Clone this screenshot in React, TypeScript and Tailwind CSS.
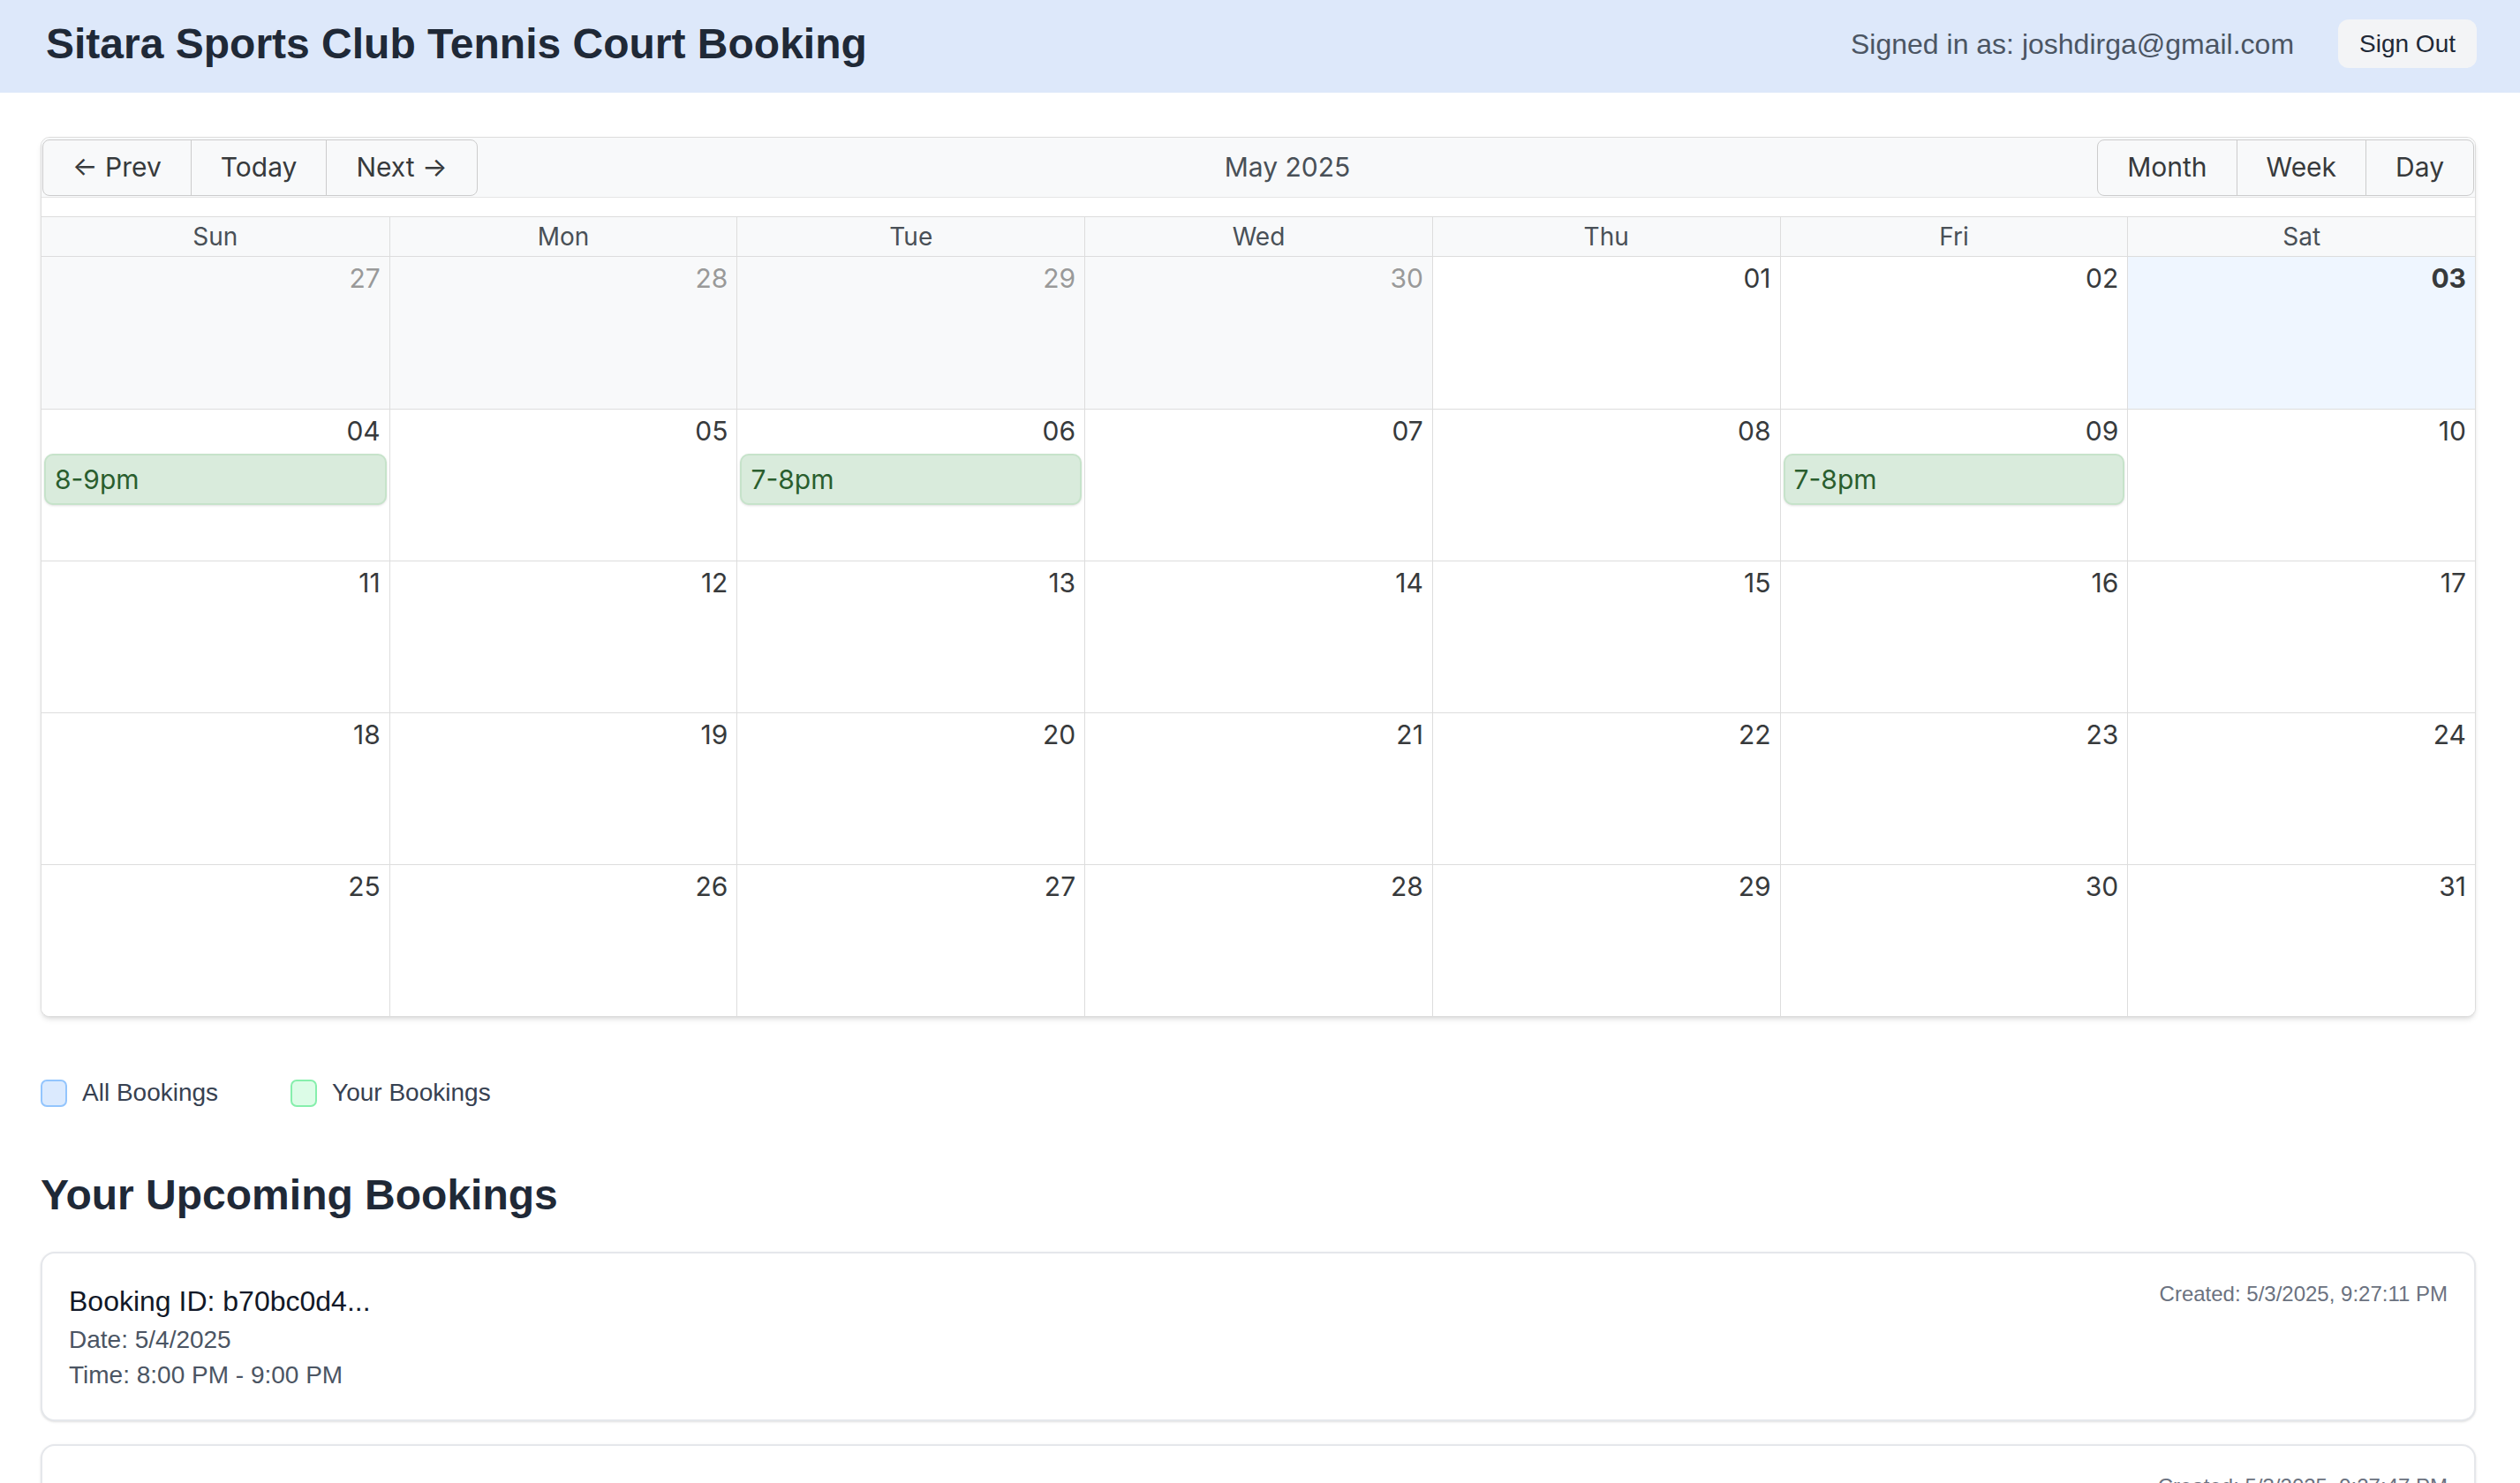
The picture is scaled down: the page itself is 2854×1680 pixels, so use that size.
import React from "react";

type Cell = { day: string; off?: boolean; today?: boolean; event?: string };

const weeks: Cell[][] = [
  [
    { day: "27", off: true },
    { day: "28", off: true },
    { day: "29", off: true },
    { day: "30", off: true },
    { day: "01" },
    { day: "02" },
    { day: "03", today: true },
  ],
  [
    { day: "04", event: "8-9pm" },
    { day: "05" },
    { day: "06", event: "7-8pm" },
    { day: "07" },
    { day: "08" },
    { day: "09", event: "7-8pm" },
    { day: "10" },
  ],
  ["11", "12", "13", "14", "15", "16", "17"].map((day) => ({ day })),
  ["18", "19", "20", "21", "22", "23", "24"].map((day) => ({ day })),
  ["25", "26", "27", "28", "29", "30", "31"].map((day) => ({ day })),
];

const dayNames = ["Sun", "Mon", "Tue", "Wed", "Thu", "Fri", "Sat"];

const bookings = [
  {
    id: "b70bc0d4...",
    date: "5/4/2025",
    time: "8:00 PM - 9:00 PM",
    created: "5/3/2025, 9:27:11 PM",
  },
  {
    id: "3f1e9a27...",
    date: "5/6/2025",
    time: "7:00 PM - 8:00 PM",
    created: "5/3/2025, 9:27:47 PM",
  },
];

function Toolbar() {
  const btn =
    "h-[64px] border border-[#ccc] bg-[#f8f9fa] px-[33px] text-[30px] text-[#373a3c]";
  return (
    <div className="flex h-[68px] items-center border-b border-[#e6e6e6] bg-[#f8f9fa] px-[1px]">
      <div className="flex">
        <button className={`${btn} rounded-l-[8px]`}>← Prev</button>
        <button className={`${btn} -ml-px`}>Today</button>
        <button className={`${btn} -ml-px rounded-r-[8px]`}>Next →</button>
      </div>
      <div className="flex-1 text-center text-[30px] text-[#495057]">May 2025</div>
      <div className="flex">
        <button className={`${btn} rounded-l-[8px]`}>Month</button>
        <button className={`${btn} -ml-px`}>Week</button>
        <button className={`${btn} -ml-px rounded-r-[8px]`}>Day</button>
      </div>
    </div>
  );
}

function MonthView() {
  return (
    <div className="mt-[21px] border-t border-[#ddd]">
      <div className="grid h-[45px] grid-cols-7 border-b border-[#ddd] bg-[#f8f9fa]">
        {dayNames.map((d, i) => (
          <div
            key={d}
            className={`flex items-center justify-center text-[28px] text-[#495057] ${i > 0 ? "border-l border-[#ddd]" : ""}`}
          >
            {d}
          </div>
        ))}
      </div>
      {weeks.map((week, w) => (
        <div
          key={w}
          className={`grid h-[172px] grid-cols-7 ${w > 0 ? "border-t border-[#ddd]" : ""}`}
        >
          {week.map((c, i) => (
            <div
              key={i}
              className={`flex flex-col px-[3px] ${i > 0 ? "border-l border-[#ddd]" : ""} ${
                c.today ? "bg-[#eff6ff]" : c.off ? "bg-[#f8f9fa]" : "bg-white"
              }`}
            >
              <div
                className={`pr-[7px] pt-[6px] text-right text-[30px] leading-[36px] ${
                  c.off ? "text-[#999]" : "text-[#373a3c]"
                } ${c.today ? "font-bold" : ""}`}
              >
                {c.day}
              </div>
              {c.event && (
                <div className="mt-[8px] flex h-[58px] items-center rounded-[10px] border-2 border-[#c6e3ca] bg-[#d9ebdc] px-[10px] text-[30px] text-[#2a5e2e] shadow-sm">
                  {c.event}
                </div>
              )}
            </div>
          ))}
        </div>
      ))}
    </div>
  );
}

export default function App() {
  return (
    <div className="min-h-screen bg-white font-['Liberation_Sans',Arial,sans-serif]">
      <header className="flex h-[105px] items-center justify-between bg-[#dde8fa] pb-[6px] pl-[52px] pr-[49px]">
        <h1 className="text-[48px] font-bold text-[#1f2937]">
          Sitara Sports Club Tennis Court Booking
        </h1>
        <div className="flex items-center gap-[50px]">
          <span className="text-[32px] text-[#4b5563]">Signed in as: joshdirga@gmail.com</span>
          <button className="h-[55px] rounded-[12px] bg-[#f3f4f6] px-[24px] text-[28px] text-[#1f2937]">
            Sign Out
          </button>
        </div>
      </header>

      <main className="px-[46px] pt-[50px] pr-[50px]">
        <div className="overflow-hidden rounded-[10px] border border-[#ddd] bg-white font-['Inter',sans-serif] shadow-md">
          <Toolbar />
          <MonthView />
        </div>

        <div className="mt-[66px] flex items-center gap-[82px]">
          <div className="flex items-center gap-[17px]">
            <span className="h-[31px] w-[30px] rounded-[7px] border-2 border-[#93c5fd] bg-[#dbeafe]" />
            <span className="text-[28px] leading-[40px] text-[#374151]">All Bookings</span>
          </div>
          <div className="flex items-center gap-[17px]">
            <span className="h-[31px] w-[30px] rounded-[7px] border-2 border-[#86efac] bg-[#dcfce7]" />
            <span className="text-[28px] leading-[40px] text-[#374151]">Your Bookings</span>
          </div>
        </div>

        <h2 className="mt-[64px] text-[48px] font-bold leading-[64px] text-[#1f2937]">
          Your Upcoming Bookings
        </h2>

        <div className="mt-[32px] flex flex-col gap-[26px] pb-[40px]">
          {bookings.map((b) => (
            <div
              key={b.id}
              className="flex justify-between rounded-[16px] border-2 border-[#e5e7eb] bg-white p-[30px] shadow-sm"
            >
              <div>
                <div className="text-[32px] leading-[48px] text-[#111827]">Booking ID: {b.id}</div>
                <div className="text-[28px] leading-[40px] text-[#4b5563]">Date: {b.date}</div>
                <div className="text-[28px] leading-[40px] text-[#4b5563]">Time: {b.time}</div>
              </div>
              <div className="text-[24px] leading-[32px] text-[#6b7280]">Created: {b.created}</div>
            </div>
          ))}
        </div>
      </main>
    </div>
  );
}
